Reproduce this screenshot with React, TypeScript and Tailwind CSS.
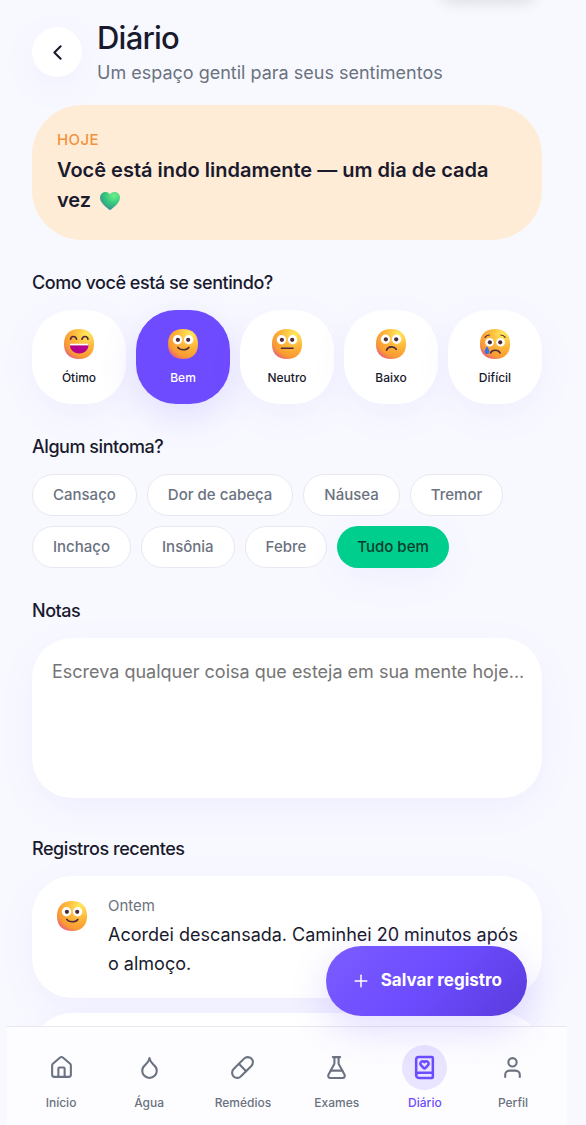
import { useState } from "react";
import type { ReactNode } from "react";
import { BookHeart, ChevronLeft, Droplet, FlaskConical, House, Pill, Plus, User } from "lucide-react";

type MoodName = "otimo" | "bem" | "neutro" | "baixo" | "dificil";

const moods: { id: MoodName; label: string }[] = [
  { id: "otimo", label: "Ótimo" },
  { id: "bem", label: "Bem" },
  { id: "neutro", label: "Neutro" },
  { id: "baixo", label: "Baixo" },
  { id: "dificil", label: "Difícil" },
];

const symptoms = ["Cansaço", "Dor de cabeça", "Náusea", "Tremor", "Inchaço", "Insônia", "Febre", "Tudo bem"];

const tabs = [
  { label: "Início", icon: House },
  { label: "Água", icon: Droplet },
  { label: "Remédios", icon: Pill },
  { label: "Exames", icon: FlaskConical },
  { label: "Diário", icon: BookHeart },
  { label: "Perfil", icon: User },
];

function Face({ mood }: { mood: MoodName }) {
  const line = { fill: "none", stroke: "#4b2b3a", strokeWidth: 1.6, strokeLinecap: "round" as const };
  const id = "face-" + mood;
  const eyeY = mood === "dificil" ? 14.3 : mood === "baixo" ? 11.3 : 11.8;
  const eyeR = mood === "dificil" ? 4.3 : 4.7;
  return (
    <svg viewBox="0 0 32 32" className="size-8 shrink-0" aria-hidden="true">
      <defs>
        <radialGradient id={id} cx="0.75" cy="0.18" r="0.98">
          <stop offset="0" stopColor="#ffe95c" />
          <stop offset="0.45" stopColor="#feb53a" />
          <stop offset="0.78" stopColor="#f99a33" />
          <stop offset="1" stopColor="#e8508c" />
        </radialGradient>
      </defs>
      <path d="M16 1C25.600 1 31 6.400 31 16S25.600 31 16 31 1 25.600 1 16 6.400 1 16 1Z" fill={"url(#" + id + ")"} />
      {mood === "otimo" ? (
        <>
          <path d="M7.500 11.300C8 7.500 12.600 7.500 13.600 11.300M18.900 11.300C19.900 7.500 24.500 7.500 25 11.300" {...line} />
          <path d="M7 16h18.400c.5 5.300-3.300 9.400-9.200 9.400S6.500 21.300 7 16Z" fill="#b5008f" />
          <path d="M7 15.700h18.400v1.700H7Z" fill="#fff" />
        </>
      ) : (
        <>
          <circle cx="10.500" cy={eyeY} r={eyeR} fill="#fff" />
          <circle cx="21.600" cy={eyeY} r={eyeR} fill="#fff" />
          <circle cx="10.900" cy={eyeY} r="2.100" fill="#4b2b3a" />
          <circle cx="21.200" cy={eyeY} r="2.100" fill="#4b2b3a" />
        </>
      )}
      {mood === "bem" && <path d="M10.800 19.400C13 22.500 19.500 22.500 21.800 19.400" {...line} />}
      {mood === "neutro" && <path d="M10.500 20.300h11.500" {...line} />}
      {mood === "baixo" && <path d="M11.500 22.300C13 18 19 17.800 21.300 21.300" {...line} />}
      {mood === "dificil" && (
        <>
          <path d="M6 9.300C7 7.800 8.700 7 10.500 7M21.800 7C23.500 7 25.200 7.800 26.200 9.300" {...line} strokeWidth={1.200} />
          <path d="M11.600 25C13 21.300 19.500 21.300 21 25" {...line} />
          <path d="M8 18.300c1.700 2.600 2.400 4.100 2.400 5.400a2.400 2.400 0 0 1-4.800 0c0-1.300.7-2.800 2.400-5.400Z" fill="#3b6ef0" />
        </>
      )}
    </svg>
  );
}

function GreenHeart() {
  return (
    <svg viewBox="0 0 24 24" className="ml-0.5 inline-block size-6 align-[-6px]" role="img" aria-label="coração verde">
      <defs>
        <radialGradient id="heart" cx="0.7" cy="0.2" r="0.9">
          <stop offset="0" stopColor="#6ef08c" />
          <stop offset="0.5" stopColor="#34c77b" />
          <stop offset="1" stopColor="#3d8497" />
        </radialGradient>
      </defs>
      <path d="M12 5.500C10.300 2.600 6.200 2.500 4 4.300 1.400 6.500 1.600 10.500 3.600 13.300 5.600 16.200 9 19 10.800 20.500a2 2 0 0 0 2.400 0C15 19 18.400 16.200 20.400 13.300c2-2.800 2.200-6.800-.4-9C17.800 2.500 13.700 2.600 12 5.500Z" fill="url(#heart)" />
    </svg>
  );
}

function Section({ title, children, className }: { title: string; children: ReactNode; className: string }) {
  return (
    <section className={className}>
      <h2 className="mb-[13px] text-lg leading-7 font-medium tracking-tight">{title}</h2>
      {children}
    </section>
  );
}

const softShadow = "shadow-[0_10px_38px_rgba(108,76,255,0.06)]";

function Entry({ mood, when, text }: { mood: MoodName; when: string; text: string }) {
  return (
    <li className={"flex items-start gap-5 rounded-[40px] bg-white px-6 py-5 " + softShadow}>
      <span className="pt-1">
        <Face mood={mood} />
      </span>
      <div>
        <p className="text-[15px] leading-5 text-[#6b7280]">{when}</p>
        <p className="mt-1 text-lg leading-[29px]">{text}</p>
      </div>
    </li>
  );
}

export default function App() {
  const [mood, setMood] = useState<MoodName>("bem");
  const [picked, setPicked] = useState<string[]>(["Tudo bem"]);
  const toggle = (name: string) =>
    setPicked((list) => (list.includes(name) ? list.filter((item) => item !== name) : [...list, name]));

  return (
    <div className="relative flex h-dvh flex-col overflow-hidden bg-[#f8f9ff] font-['Inter',sans-serif] text-[#1a1a2e]">
      <main className="min-h-0 flex-1 overflow-y-auto pr-3 [scrollbar-width:none]">
        <div className="mx-auto max-w-[560px] px-[25px] pb-10">
          <header className="flex items-center gap-[15px] pt-[17px]">
            <button type="button" aria-label="Voltar" className={"grid size-[50px] shrink-0 place-items-center rounded-full bg-white " + softShadow}>
              <ChevronLeft className="size-[25px]" />
            </button>
            <div>
              <h1 className="text-[31px] leading-[42px] font-medium tracking-tight">Diário</h1>
              <p className="text-lg leading-7 text-[#6b7280]">Um espaço gentil para seus sentimentos</p>
            </div>
          </header>

          <div className="mt-[18px] rounded-[50px] bg-[#ffecd6] p-[25px]">
            <p className="text-[15px] leading-5 font-medium tracking-wide text-[#f2923c] uppercase">Hoje</p>
            <p className="mt-[5px] text-xl leading-[30px] font-semibold">
              Você está indo lindamente — um dia de cada vez <GreenHeart />
            </p>
          </div>

          <Section title="Como você está se sentindo?" className="mt-[29px]">
            <div className="grid grid-cols-5 gap-[10px]">
              {moods.map((item) => (
                <button
                  key={item.id}
                  type="button"
                  aria-pressed={mood === item.id}
                  onClick={() => setMood(item.id)}
                  className={
                    "flex flex-col items-center gap-2 rounded-[40px] pt-[18px] pb-4 text-xs leading-5 font-medium " +
                    (mood === item.id ? "bg-[#6f4bff] text-white shadow-[0_12px_38px_rgba(108,76,255,0.16)]" : "bg-white " + softShadow)
                  }
                >
                  <Face mood={item.id} />
                  {item.label}
                </button>
              ))}
            </div>
          </Section>

          <Section title="Algum sintoma?" className="mt-[29px]">
            <div className="flex flex-wrap gap-[10px]">
              {symptoms.map((name) => (
                <button
                  key={name}
                  type="button"
                  aria-pressed={picked.includes(name)}
                  onClick={() => toggle(name)}
                  className={
                    "min-h-[42px] rounded-full px-5 py-[10px] text-[15px] leading-5 font-medium " +
                    (picked.includes(name)
                      ? "bg-[#00ce8c] text-[#0b3d2e] " + softShadow
                      : "border border-[#e8e8f2] bg-white text-[#6b7280]")
                  }
                >
                  {name}
                </button>
              ))}
            </div>
          </Section>

          <section className="mt-[29px]">
            <label htmlFor="notes" className="mb-[13px] block text-lg leading-7 font-medium tracking-tight">
              Notas
            </label>
            <textarea
              id="notes"
              placeholder="Escreva qualquer coisa que esteja em sua mente hoje..."
              className={"block h-40 w-full resize-none rounded-[40px] bg-white py-5 pr-3 pl-5 text-lg leading-7 outline-none placeholder:text-[#757575] " + softShadow}
            />
          </section>

          <Section title="Registros recentes" className="mt-[37px]">
            <ul className="flex flex-col gap-[15px]">
              <Entry mood="bem" when="Ontem" text="Acordei descansada. Caminhei 20 minutos após o almoço." />
              <Entry mood="neutro" when="Segunda" text="Um pouco cansada, mas tranquila." />
            </ul>
          </Section>
        </div>
      </main>

      <div className="relative pr-3">
        <div className="relative mx-auto max-w-[560px]">
          <button
            type="button"
            className="absolute right-10 bottom-full mb-[10px] flex h-[70px] items-center gap-[10px] rounded-full bg-[linear-gradient(135deg,#7c5cff_0%,#6c4cff_50%,#5a3bdc_100%)] px-[25px] text-[17px] font-bold whitespace-nowrap text-white shadow-[0_12px_38px_rgba(108,76,255,0.2)]"
          >
            <Plus className="size-5" strokeWidth={1.800} />
            Salvar registro
          </button>
          <nav aria-label="Principal" className="flex justify-around border-t border-[#e8e8f2] bg-[#fdfdff] px-[10px] pt-[18px] pb-3">
            {tabs.map(({ label, icon: Icon }) => (
              <a
                key={label}
                href={"#" + label}
                aria-current={label === "Diário" ? "page" : undefined}
                className={"flex flex-col items-center gap-[3px] text-xs leading-5 font-medium " + (label === "Diário" ? "text-[#6c4cff]" : "text-[#6b7280]")}
              >
                <span className={"grid size-[45px] place-items-center rounded-full " + (label === "Diário" ? "bg-[#e9e4ff]" : "")}>
                  <Icon className="size-[25px]" strokeWidth={label === "Diário" ? 2.400 : 2} />
                </span>
                {label}
              </a>
            ))}
          </nav>
        </div>
      </div>

      <div aria-hidden="true" className="absolute -top-10 right-12 h-10 w-[100px] rounded-2xl bg-white shadow-[0_4px_14px_rgba(0,0,0,0.1)]" />
    </div>
  );
}
